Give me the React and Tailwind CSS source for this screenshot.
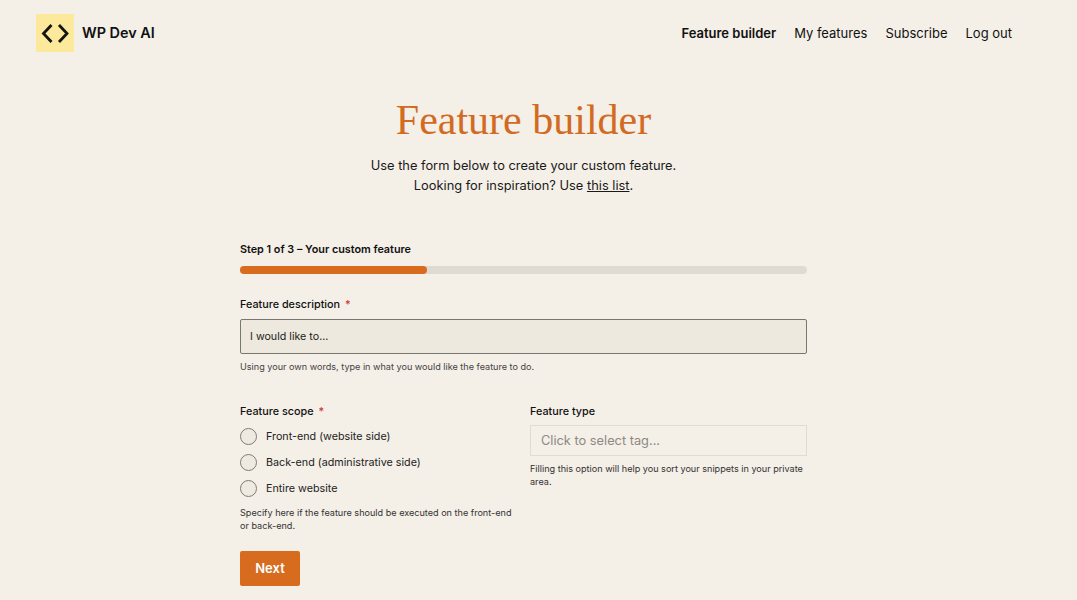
import React from "react";

const SANS = "font-['Inter',sans-serif]";

function RadioRow({ label }) {
  return (
    <label className="flex items-center gap-[9px] h-[26px]">
      <span className="w-[17px] h-[17px] rounded-full border border-[#7c7c78] bg-[#efeae0]" />
      <span className="pt-[2px] text-[10.75px] text-[#222]">{label}</span>
    </label>
  );
}

function Required() {
  return <span className="ml-[5px] text-[#c8322b]">*</span>;
}

export default function App() {
  return (
    <div className={`${SANS} h-[600px] overflow-hidden bg-[#f4efe7] text-[#111]`}>
      {/* Header */}
      <header className="flex items-center justify-between pl-[36px] pr-[65px] pt-[14px]">
        <div className="flex items-center gap-[8px]">
          <div className="w-[38px] h-[38px] bg-[#fde99c] flex items-center justify-center">
            <svg width="30" height="20" viewBox="0 0 30 20" fill="none" stroke="#15150f" strokeWidth="2.8">
              <path d="M11.5 2 L3.5 10.5 L11.5 19" />
              <path d="M19 2 L27 10.5 L19 19" />
            </svg>
          </div>
          <span className="text-[14.4px] font-semibold">WP Dev AI</span>
        </div>
        <nav className="flex items-center gap-[18px] pt-[2px] text-[13px]">
          <a className="font-semibold">Feature builder</a>
          <a>My features</a>
          <a>Subscribe</a>
          <a>Log out</a>
        </nav>
      </header>

      <main className="w-[567px] ml-[240px]">
        {/* Title */}
        <div className="text-center mt-[38px]">
          <h1 className="font-['Liberation_Serif',serif] text-[42px] leading-[60px] text-[#d26a1f]">Feature builder</h1>
          <p className="mt-[6px] text-[12.85px] leading-[20px] text-[#1a1a1a]">
            Use the form below to create your custom feature.
            <br />
            Looking for inspiration? Use <a className="underline">this list</a>.
          </p>
        </div>

        {/* Form */}
        <div className="mt-[46px]">
          <div className="text-[10.8px] leading-[16px] font-semibold">Step 1 of 3 – Your custom feature</div>
          <div className="mt-[8px] h-[8px] rounded-full bg-[#dfdbd2]">
            <div className="h-full w-[33%] rounded-full bg-[#d76c1f]" />
          </div>

          <div className="mt-[23px] text-[10.8px] leading-[16px] font-medium">
            Feature description
            <Required />
          </div>
          <div className="mt-[6px] h-[35px] flex items-center pl-[9px] pt-[2px] border border-[#77776f] rounded-[2px] bg-[#eee9de] text-[10.7px] text-[#222]">
            I would like to...
          </div>
          <p className="mt-[6px] text-[9.1px] leading-[13px] text-[#444]">
            Using your own words, type in what you would like the feature to do.
          </p>

          <div className="mt-[31px] grid grid-cols-[290px_277px]">
            <div>
              <div className="text-[10.8px] leading-[16px] font-medium">
                Feature scope
                <Required />
              </div>
              <div className="mt-[3px]">
                <RadioRow label="Front-end (website side)" />
                <RadioRow label="Back-end (administrative side)" />
                <RadioRow label="Entire website" />
              </div>
              <p className="mt-[5px] w-[280px] text-[9.1px] leading-[13px] text-[#333]">
                Specify here if the feature should be executed on the front-end or back-end.
              </p>
            </div>
            <div>
              <div className="text-[10.8px] leading-[16px] font-medium">Feature type</div>
              <div className="mt-[5px] h-[31px] flex items-center pl-[10px] border border-[#e0dcd3] text-[12.8px] text-[#8d8a84]">
                Click to select tag...
              </div>
              <p className="mt-[6px] text-[9.1px] leading-[13px] text-[#333]">
                Filling this option will help you sort your snippets in your private area.
              </p>
            </div>
          </div>

          <button className="mt-[19px] w-[60px] h-[35px] rounded-[2px] bg-[#d76c1f] text-white text-[13px] font-semibold">
            Next
          </button>
        </div>
      </main>
    </div>
  );
}
